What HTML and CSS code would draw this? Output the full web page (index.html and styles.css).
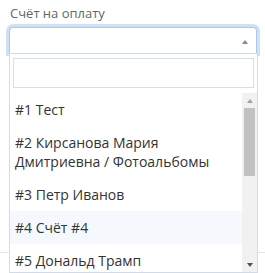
FILE: index.html
```html
<!DOCTYPE html>
<html lang="ru">
<head>
    <meta charset="UTF-8">
    <title>Счёт на оплату</title>
    <link rel="stylesheet" href="styles.css">
</head>
<body>
    <div class="field">
        <label class="field-label">Счёт на оплату</label>
        <div class="select">
            <span class="select-arrow"></span>
        </div>
        <div class="field-line"></div>

        <div class="dropdown">
            <div class="dropdown-search">
                <input type="text" class="search-input">
            </div>
            <div class="results">
                <ul class="options">
                    <li>#1 Тест</li>
                    <li>#2 Кирсанова Мария Дмитриевна / Фотоальбомы</li>
                    <li>#3 Петр Иванов</li>
                    <li class="hover">#4 Счёт #4</li>
                    <li>#5 Дональд Трамп</li>
                    <li>#6 Иван Петров</li>
                    <li>#7 Счёт #7</li>
                </ul>
                <div class="scrollbar">
                    <span class="scroll-btn up"></span>
                    <div class="scroll-track">
                        <div class="scroll-thumb"></div>
                    </div>
                    <span class="scroll-btn down"></span>
                </div>
            </div>
        </div>
    </div>
</body>
</html>
```

FILE: styles.css
```css
html, body {
    height: 100%;
}

body {
    margin: 0;
    min-height: 273px;
    font-family: "Open Sans", Arial, sans-serif;
    background: #fff;
    overflow: hidden;
}

.field {
    position: relative;
    padding-top: 4px;
    min-height: 100%;
}

.field-label {
    display: block;
    margin-left: 10px;
    font-size: 13px;
    line-height: 18px;
    color: #666;
}

.select {
    position: relative;
    height: 25px;
    margin: 5px 8px 0 9px;
    border: 1px solid #aac7ee;
    border-bottom: none;
    border-radius: 4px 4px 0 0;
    box-shadow: 0 0 0 3px #d0e1f7;
    background: #fff;
}

.select-arrow {
    position: absolute;
    right: 8px;
    top: 12px;
    width: 0;
    height: 0;
    border-left: 3px solid transparent;
    border-right: 3px solid transparent;
    border-bottom: 4px solid #888;
}

.field-line {
    height: 199px;
    border-bottom: 1px solid #e6e6e6;
}

/* dropdown lies over the form */
.dropdown {
    position: absolute;
    top: 53px;
    left: 9px;
    width: 247px;
    border: 1px solid #cfdcee;
    background: #fff;
}

.dropdown-search {
    padding: 4px 3px 5px;
}

.search-input {
    display: block;
    box-sizing: border-box;
    width: 100%;
    height: 30px;
    margin: 0;
    border: 1px solid #d3dff0;
    outline: none;
}

.results {
    display: flex;
    height: 179px;
}

.options {
    flex: 1;
    list-style: none;
    margin: 0;
    padding: 0;
    overflow: hidden;
}

.options li {
    padding: 7px 6px 7px 5px;
    font-size: 14px;
    line-height: 19px;
    color: #333;
}

.options li.hover {
    background: #f5f8fc;
}

.scrollbar {
    display: flex;
    flex-direction: column;
    width: 15px;
    background: #f1f1f1;
}

.scroll-btn {
    display: flex;
    align-items: center;
    justify-content: center;
    height: 15px;
}

.scroll-btn::before {
    content: "";
    border-left: 3.5px solid transparent;
    border-right: 3.5px solid transparent;
}

.scroll-btn.up::before {
    border-bottom: 4px solid #a3a3a3;
}

.scroll-btn.down::before {
    border-top: 4px solid #505050;
}

.scroll-track {
    flex: 1;
    padding: 0 2px;
}

.scroll-thumb {
    height: 68px;
    background: #c1c1c1;
}
```
